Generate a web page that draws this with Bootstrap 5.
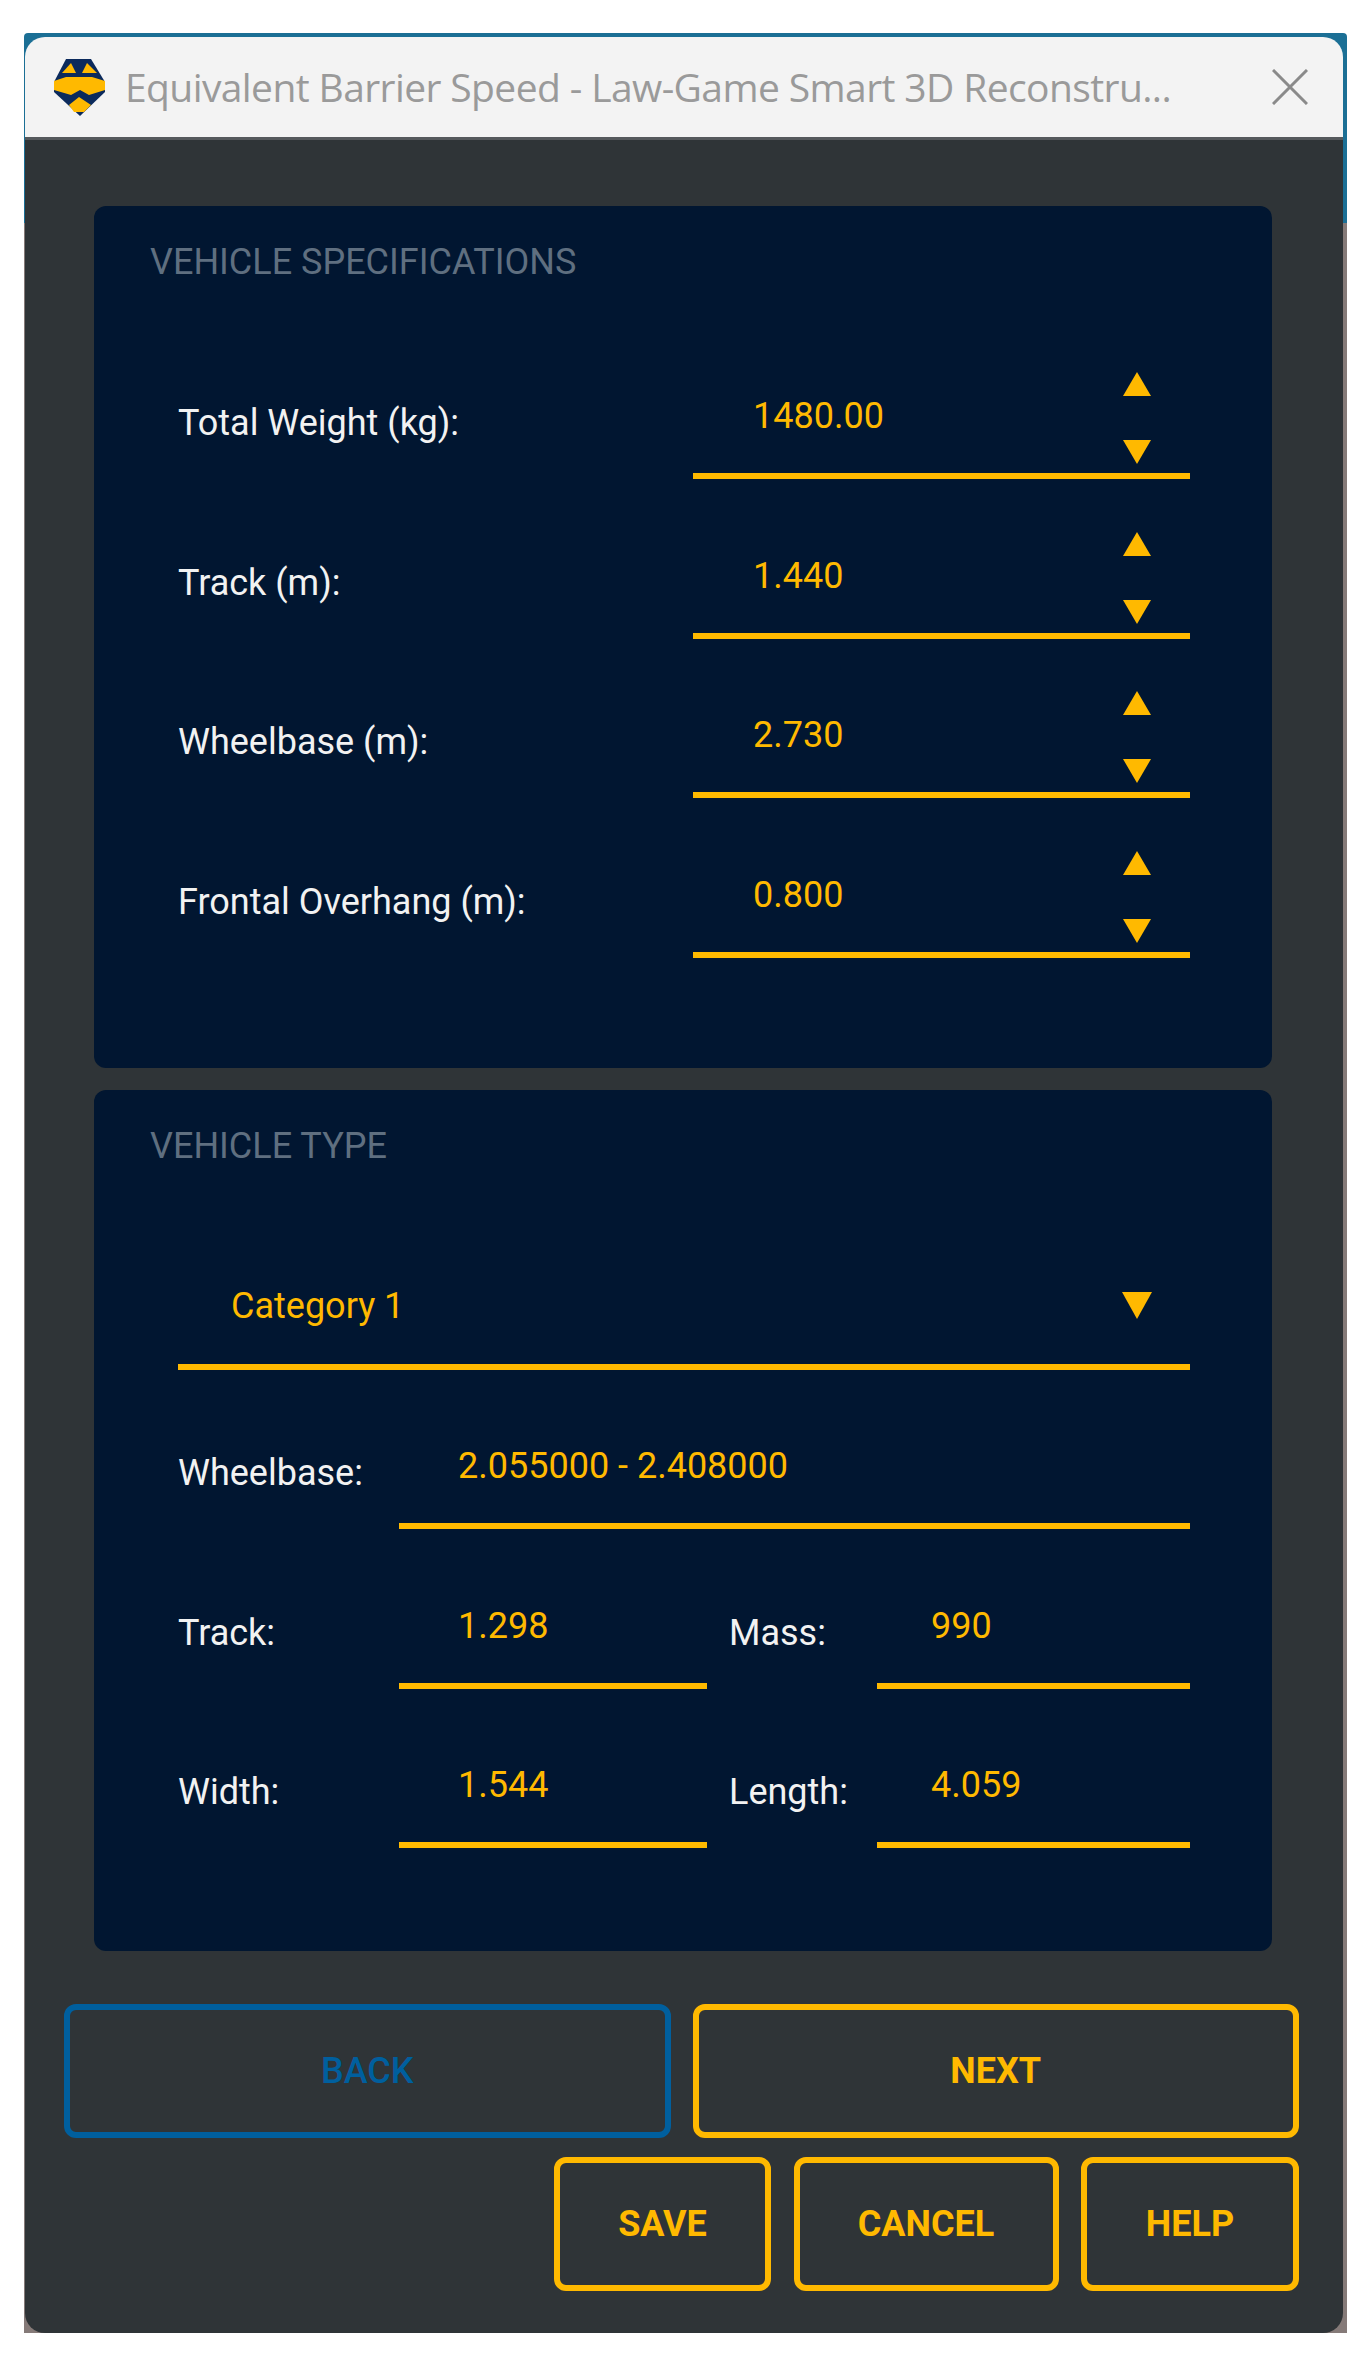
<!DOCTYPE html>
<html lang="en">
<head>
<meta charset="utf-8">
<title>Equivalent Barrier Speed</title>
<link href="https://cdn.jsdelivr.net/npm/bootstrap@5.3.0/dist/css/bootstrap.min.css" rel="stylesheet">
<style>
html,body{background:#fff;margin:0;}
.win-frame{margin:33px 21px 0 24px;width:1323px;height:2300px;padding:4px 4px 0 1px;border-radius:4px 4px 0 0;
  background:linear-gradient(#1b6f95 0 190px,#857a78 190px);}
.win-title{height:103px;background:#f3f3f3;border-bottom:3px solid #55595c;border-radius:20px 20px 0 0;padding:0 35px 0 29px;gap:20px;}
.win-title svg{flex:none;}
.win-name{font-family:"Open Sans","Liberation Sans",sans-serif;font-size:39px;color:#9a9a9a;white-space:nowrap;flex:1;min-width:0;letter-spacing:-.6px;}
.win-body{height:2193px;background:#2f3437;border-radius:0 0 20px 20px;padding:66px 71px 0 69px;font-family:Roboto,"Liberation Sans",sans-serif;}
.pane{background:#011631;border-radius:12px;padding:32px 82px 0 84px;}
.pane-one{height:862px;margin-bottom:22px;}
.pane-two{height:861px;}
.pane-head{font-size:36px;line-height:48px;color:#5f6f80;margin-left:-28px;margin-bottom:75px;}
.pane-two .pane-head{margin-bottom:77px;}
.stack{display:flex;flex-direction:column;gap:41.5px;}
.row-line{display:flex;height:118px;}
.row-label{display:flex;align-items:center;font-size:36px;color:#f2f2f2;flex:none;padding-top:6px;}
.w-a{width:515px;}
.w-b{width:221px;}
.w-c{width:148px;margin-left:22px;}
.field{flex:1;border-bottom:6px solid #ffb900;display:flex;align-items:center;justify-content:space-between;color:#ffb900;font-size:36px;min-width:0;padding-bottom:2px;}
.field-a{padding-left:60px;padding-right:39px;}
.field-b{padding-left:59px;}
.field-c{padding-left:59px;flex:none;width:308px;}
.field-d{padding-left:54px;}
.select-line{height:123px;border-bottom:6px solid #ffb900;display:flex;align-items:center;justify-content:space-between;color:#ffb900;font-size:36px;padding:0 38px 0 53px;margin-bottom:41px;}
.spin{display:flex;flex-direction:column;justify-content:space-between;height:100%;padding:11px 0 7px;}
.tri{display:block;width:28px;height:24px;fill:#ffb900;}
.tri-big{width:30px;height:27px;}
.btn-rows{margin:53px -27px 0 -30px;display:flex;flex-direction:column;gap:19px;}
.btn-gold,.btn-blue{height:134px;background:transparent;font-family:Roboto,"Liberation Sans",sans-serif;font-size:36px;font-weight:700;border-radius:12px;padding:0;border:6px solid #ffb900;color:#ffb900;display:flex;align-items:center;justify-content:center;}
.btn-blue{border-color:#005f9e;color:#005f9e;font-weight:500;}
.btn-blue:disabled{border-color:#005f9e;color:#005f9e;opacity:1;background:transparent;}
.w-half{width:609px;}
.w-save{width:217px;}
.w-cancel{width:265px;}
.w-help{width:218px;}
.gap-wide{gap:22px;}
.gap-mid{gap:22.5px;}
</style>
</head>
<body>
<div class="win-frame">
  <div class="win-title d-flex align-items-center">
    <svg width="51" height="57" viewBox="0 0 51 57" aria-label="Logo">
      <polygon fill="#0b2a5c" points="12,0 37,0 51,23 51,33 26,57 0,33 0,23"/>
      <polygon fill="#ffb900" points="17,4 22,14 8,14"/>
      <polygon fill="#ffb900" points="33,4 43,14 28,14"/>
      <polygon fill="#ffb900" points="0,22 12,18 38,18 51,22 51,31 35,36 26,31 17,36 0,31"/>
      <polygon fill="#ffb900" points="25,38 37,46 30,53 20,53 15,46"/>
    </svg>
    <div class="win-name">Equivalent Barrier Speed - Law-Game Smart 3D Reconstru...</div>
    <svg width="36" height="36" viewBox="0 0 36 36" aria-label="Close"><path d="M1 1 35 35M35 1 1 35" stroke="#8a8a8a" stroke-width="3" fill="none"/></svg>
  </div>
  <div class="win-body">
    <section class="pane pane-one">
      <div class="pane-head">VEHICLE SPECIFICATIONS</div>
      <div class="stack">
        <div class="row-line"><div class="row-label w-a">Total Weight (kg):</div><div class="field field-a"><span>1480.00</span><span class="spin"><svg class="tri" viewBox="0 0 28 24"><polygon points="14,0 28,24 0,24"/></svg><svg class="tri" viewBox="0 0 28 24"><polygon points="0,0 28,0 14,24"/></svg></span></div></div>
        <div class="row-line"><div class="row-label w-a">Track (m):</div><div class="field field-a"><span>1.440</span><span class="spin"><svg class="tri" viewBox="0 0 28 24"><polygon points="14,0 28,24 0,24"/></svg><svg class="tri" viewBox="0 0 28 24"><polygon points="0,0 28,0 14,24"/></svg></span></div></div>
        <div class="row-line"><div class="row-label w-a">Wheelbase (m):</div><div class="field field-a"><span>2.730</span><span class="spin"><svg class="tri" viewBox="0 0 28 24"><polygon points="14,0 28,24 0,24"/></svg><svg class="tri" viewBox="0 0 28 24"><polygon points="0,0 28,0 14,24"/></svg></span></div></div>
        <div class="row-line"><div class="row-label w-a">Frontal Overhang (m):</div><div class="field field-a"><span>0.800</span><span class="spin"><svg class="tri" viewBox="0 0 28 24"><polygon points="14,0 28,24 0,24"/></svg><svg class="tri" viewBox="0 0 28 24"><polygon points="0,0 28,0 14,24"/></svg></span></div></div>
      </div>
    </section>
    <section class="pane pane-two">
      <div class="pane-head">VEHICLE TYPE</div>
      <div class="select-line"><span>Category 1</span><svg class="tri tri-big" viewBox="0 0 30 27"><polygon points="0,0 30,0 15,27"/></svg></div>
      <div class="stack">
        <div class="row-line"><div class="row-label w-b">Wheelbase:</div><div class="field field-b">2.055000 - 2.408000</div></div>
        <div class="row-line"><div class="row-label w-b">Track:</div><div class="field field-c">1.298</div><div class="row-label w-c">Mass:</div><div class="field field-d">990</div></div>
        <div class="row-line"><div class="row-label w-b">Width:</div><div class="field field-c">1.544</div><div class="row-label w-c">Length:</div><div class="field field-d">4.059</div></div>
      </div>
    </section>
    <div class="btn-rows">
      <div class="d-flex gap-wide">
        <button class="btn btn-blue w-half" disabled>BACK</button>
        <button class="btn btn-gold w-half">NEXT</button>
      </div>
      <div class="d-flex justify-content-end gap-mid">
        <button class="btn btn-gold w-save">SAVE</button>
        <button class="btn btn-gold w-cancel">CANCEL</button>
        <button class="btn btn-gold w-help">HELP</button>
      </div>
    </div>
  </div>
</div>
<script src="https://cdn.jsdelivr.net/npm/bootstrap@5.3.0/dist/js/bootstrap.bundle.min.js"></script>
</body>
</html>
